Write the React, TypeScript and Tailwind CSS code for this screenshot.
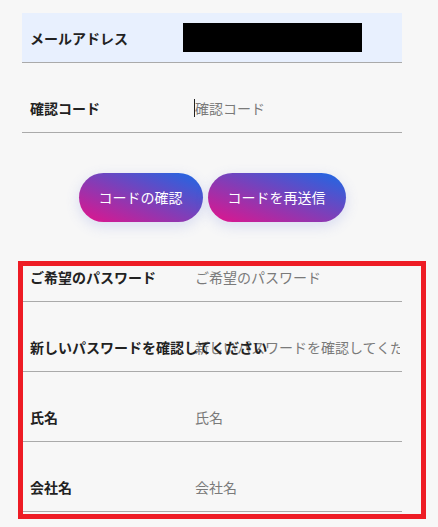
import { useState } from 'react';

const font = { fontFamily: '"Noto Sans CJK JP", "Noto Sans", sans-serif' };

function Row({ label, placeholder, caret }: { label: string; placeholder: string; caret?: boolean }) {
  const [value, setValue] = useState('');
  return (
    <div className="h-[70px] border-b border-[#aaaaaa] flex items-end pb-[14px]">
      <div className="w-[171px] shrink-0 pl-2 text-[14px] leading-5 font-bold text-[#222] whitespace-nowrap overflow-visible relative z-0">
        {label}
      </div>
      <div className="flex-1 min-w-0 flex items-center pl-px pr-[2px]">
        {caret && <span className="w-px h-[18px] bg-[#222]" />}
        <input
          value={value}
          onChange={(e) => setValue(e.target.value)}
          placeholder={placeholder}
          className={`w-full bg-transparent outline-none text-[14px] leading-5 text-[#222] placeholder:text-[#7a7a7a] ${caret ? '' : 'pl-px'}`}
          style={font}
        />
      </div>
    </div>
  );
}

export default function App() {
  return (
    <div className="min-h-[527px] bg-[#f7f7f7] relative" style={font}>
      <div className="w-[380px] ml-[22px] pt-[13px]">
        <div className="h-[50px] bg-[#e8f0fe] border-b border-[#aaaaaa] flex items-end pb-[14px] relative">
          <div className="w-[161px] pl-2 text-[14px] leading-5 font-bold text-[#222]">メールアドレス</div>
          <div className="absolute left-[161px] top-[10px] w-[179px] h-[29px] bg-black" />
        </div>

        <Row label="確認コード" placeholder="確認コード" caret />

        <div className="flex justify-center gap-[5px] pt-[40px] pb-[10px]">
          <button className="h-[49px] px-5 rounded-full bg-[linear-gradient(to_top_right,#e3138b,#1a6ae6)] text-white text-[14px] shadow-[0_4px_14px_rgba(90,110,220,0.2)]">
            コードの確認
          </button>
          <button className="h-[49px] px-5 rounded-full bg-[linear-gradient(to_top_right,#e3138b,#1a6ae6)] text-white text-[14px] shadow-[0_4px_14px_rgba(90,110,220,0.2)]">
            コードを再送信
          </button>
        </div>

        <Row label="ご希望のパスワード" placeholder="ご希望のパスワード" />
        <Row label="新しいパスワードを確認してください" placeholder="新しいパスワードを確認してください" />
        <Row label="氏名" placeholder="氏名" />
        <Row label="会社名" placeholder="会社名" />
      </div>

      {/* annotation box */}
      <div className="absolute left-[18px] top-[261px] w-[408px] h-[258px] border-[5px] border-[#ee1c25] pointer-events-none" />
    </div>
  );
}
